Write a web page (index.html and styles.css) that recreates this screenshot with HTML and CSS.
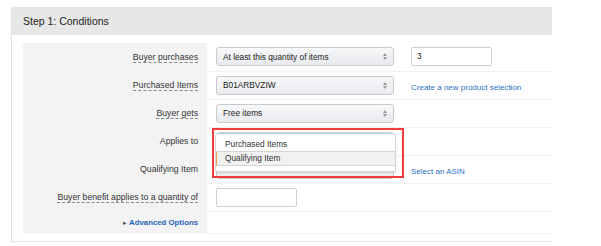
FILE: index.html
```html
<!DOCTYPE html>
<html>
<head>
    <meta charset="UTF-8">
    <title>Step 1: Conditions</title>
    <link rel="stylesheet" href="styles.css">
</head>
<body>
    <div class="panel">
        <div class="panel-head">Step 1: Conditions</div>
        <div class="panel-body">
            <table class="cond">
                <colgroup>
                    <col class="c-label">
                    <col class="c-value">
                    <col class="c-extra">
                </colgroup>
                <tr>
                    <th><span class="tip">Buyer purchases</span></th>
                    <td class="val">
                        <div class="select">At least this quantity of items
                            <svg class="arr" width="4" height="7" viewBox="0 0 4 7"><path d="M0 3 L2 0 L4 3 Z M0 4 L2 7 L4 4 Z" fill="#999"/></svg>
                        </div>
                    </td>
                    <td class="extra"><div class="input">3</div></td>
                </tr>
                <tr>
                    <th><span class="tip">Purchased Items</span></th>
                    <td class="val">
                        <div class="select">B01ARBVZIW
                            <svg class="arr" width="4" height="7" viewBox="0 0 4 7"><path d="M0 3 L2 0 L4 3 Z M0 4 L2 7 L4 4 Z" fill="#999"/></svg>
                        </div>
                    </td>
                    <td class="extra"><a class="link" href="#">Create a new product selection</a></td>
                </tr>
                <tr>
                    <th><span class="tip">Buyer gets</span></th>
                    <td class="val">
                        <div class="select">Free items
                            <svg class="arr" width="4" height="7" viewBox="0 0 4 7"><path d="M0 3 L2 0 L4 3 Z M0 4 L2 7 L4 4 Z" fill="#999"/></svg>
                        </div>
                    </td>
                    <td class="extra"></td>
                </tr>
                <tr>
                    <th>Applies to</th>
                    <td class="val anchor">
                        <div class="select"></div>
                        <div class="popup">
                            <div class="opt">Purchased Items</div>
                            <div class="opt active">Qualifying Item</div>
                        </div>
                        <div class="mark"></div>
                    </td>
                    <td class="extra"></td>
                </tr>
                <tr>
                    <th>Qualifying Item</th>
                    <td class="val">
                        <div class="select"></div>
                    </td>
                    <td class="extra"><a class="link" href="#">Select an ASIN</a></td>
                </tr>
                <tr>
                    <th><span class="tip">Buyer benefit applies to a quantity of</span></th>
                    <td class="val"><div class="input"></div></td>
                    <td class="extra"></td>
                </tr>
                <tr class="last">
                    <th><span class="tri">&#9656;</span> <a class="adv" href="#">Advanced Options</a></th>
                    <td class="val"></td>
                    <td class="extra"></td>
                </tr>
            </table>
        </div>
    </div>
</body>
</html>
```

FILE: styles.css
```css
body {
    margin: 0;
    padding: 0;
    background: #fff;
    font-family: "Liberation Sans", Arial, sans-serif;
    color: #333;
}
.panel {
    margin: 7px 0 0 11px;
    width: 540px;
    border: 1px solid #e2e2e2;
    border-right: none;
}
.panel-head {
    height: 27px;
    line-height: 27px;
    padding-left: 11px;
    background-color: #e7e7e7;
    font-size: 10.5px;
    color: #222;
}
.panel-body {
    padding: 8px 0 7px 11px;
}
.cond {
    width: 529px;
    table-layout: fixed;
    border-collapse: collapse;
}
.c-label { width: 184px; }
.c-value { width: 195px; }
.c-extra { width: 150px; }
.cond tr {
    height: 28px;
}
.cond tr.last {
    height: 22px;
}
.cond th {
    background-color: #f3f3f3;
    text-align: right;
    padding: 0 9px 0 0;
    font-size: 8.7px;
    font-weight: normal;
    color: #333;
    border-bottom: 1px solid #f8f8f8;
    vertical-align: middle;
}
.cond td {
    border-bottom: 1px solid #f0f0f0;
    vertical-align: middle;
}
.cond td.val {
    padding-left: 9px;
}
.cond td.extra {
    padding-left: 9px;
}
.tip {
    border-bottom: 1px dashed #888;
}
.select {
    box-sizing: border-box;
    width: 178px;
    height: 19px;
    border: 1px solid #cacaca;
    border-radius: 3px;
    background: linear-gradient(#f7f8fa, #e8eaed);
    font-size: 8.3px;
    color: #222;
    padding: 0 6px;
    display: flex;
    align-items: center;
    justify-content: space-between;
}
.input {
    box-sizing: border-box;
    width: 81px;
    height: 19px;
    border: 1px solid #cfcfcf;
    border-radius: 2px;
    background: #fff;
    font-size: 8.3px;
    padding-left: 5px;
    line-height: 17px;
    color: #222;
}
.link {
    font-size: 8px;
    color: #2a6fc4;
    text-decoration: none;
}
.tri {
    font-size: 7px;
    color: #555;
}
.adv {
    font-size: 7.8px;
    font-weight: bold;
    color: #1f64b8;
    text-decoration: none;
}
.anchor {
    position: relative;
}
.popup {
    position: absolute;
    left: 8px;
    top: 5px;
    width: 181px;
    height: 39px;
    box-sizing: border-box;
    background: #fff;
    border: 1px solid #d6d6d6;
    border-radius: 3px;
    box-shadow: 0 1px 2px rgba(0, 0, 0, 0.12);
    padding-top: 3px;
    z-index: 2;
}
.opt {
    height: 14px;
    line-height: 14px;
    padding-left: 9px;
    font-size: 8.3px;
    color: #333;
}
.opt.active {
    background: #f1f1f1;
    border-top: 1px solid #d4d4d4;
    border-bottom: 1px solid #d4d4d4;
    border-left: 1px solid #e8a354;
    padding-left: 8px;
    height: 13px;
    line-height: 13px;
}
.mark {
    position: absolute;
    left: 5px;
    top: 0;
    width: 188px;
    height: 46px;
    border: 2px solid #ef3b3b;
    z-index: 3;
}
```
